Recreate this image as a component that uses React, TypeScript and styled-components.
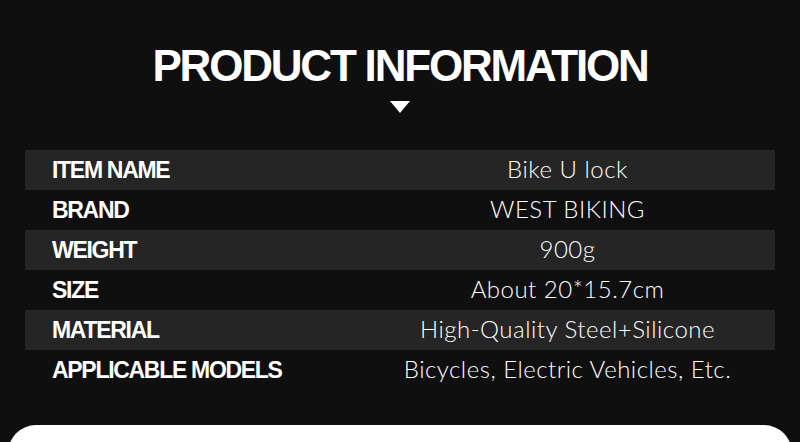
import styled, { createGlobalStyle } from 'styled-components';

const GlobalStyle = createGlobalStyle`
  html, body {
    margin: 0;
    padding: 0;
    background: #0f0f0f;
  }
`;

const Page = styled.div`
  width: 800px;
  height: 442px;
  overflow: hidden;
  background: #0f0f0f;
  display: flex;
  flex-direction: column;
  align-items: center;
`;

const Title = styled.h1`
  margin: 42px 0 0;
  font-family: 'Liberation Sans', Arial, sans-serif;
  font-weight: 700;
  font-size: 44px;
  line-height: 48px;
  color: #fff;
  letter-spacing: -2.2px;
`;

const Arrow = styled.div`
  margin-top: 11px;
  width: 0;
  height: 0;
  border-left: 10px solid transparent;
  border-right: 10px solid transparent;
  border-top: 12px solid #fff;
`;

const Table = styled.div`
  margin-top: 37px;
  width: 750px;
  display: flex;
  flex-direction: column;
`;

const Row = styled.div<{ $shade: boolean }>`
  height: 40px;
  display: grid;
  grid-template-columns: 335px 1fr;
  align-items: center;
  background: ${(p) => (p.$shade ? '#252525' : 'transparent')};
`;

const Label = styled.div`
  padding-left: 27px;
  font-family: 'Liberation Sans', Arial, sans-serif;
  font-weight: 700;
  font-size: 23px;
  letter-spacing: -1.3px;
  color: #fff;
`;

const Value = styled.div`
  padding-bottom: 4px;
  text-align: center;
  font-family: Lato, 'Liberation Sans', sans-serif;
  font-weight: 300;
  font-size: 24px;
  letter-spacing: 0.5px;
  color: #fff;
`;

const Card = styled.div`
  margin-top: 35px;
  width: 784px;
  height: 60px;
  flex-shrink: 0;
  background: #fff;
  border-radius: 28px 28px 0 0;
`;

const rows = [
  ['ITEM NAME', 'Bike U lock'],
  ['BRAND', 'WEST BIKING'],
  ['WEIGHT', '900g'],
  ['SIZE', 'About 20*15.7cm'],
  ['MATERIAL', 'High-Quality Steel+Silicone'],
  ['APPLICABLE MODELS', 'Bicycles, Electric Vehicles, Etc.'],
];

export default function App() {
  return (
    <Page>
      <GlobalStyle />
      <Title>PRODUCT INFORMATION</Title>
      <Arrow />
      <Table>
        {rows.map(([label, value], i) => (
          <Row key={label} $shade={i % 2 === 0}>
            <Label>{label}</Label>
            <Value>{value}</Value>
          </Row>
        ))}
      </Table>
      <Card />
    </Page>
  );
}
